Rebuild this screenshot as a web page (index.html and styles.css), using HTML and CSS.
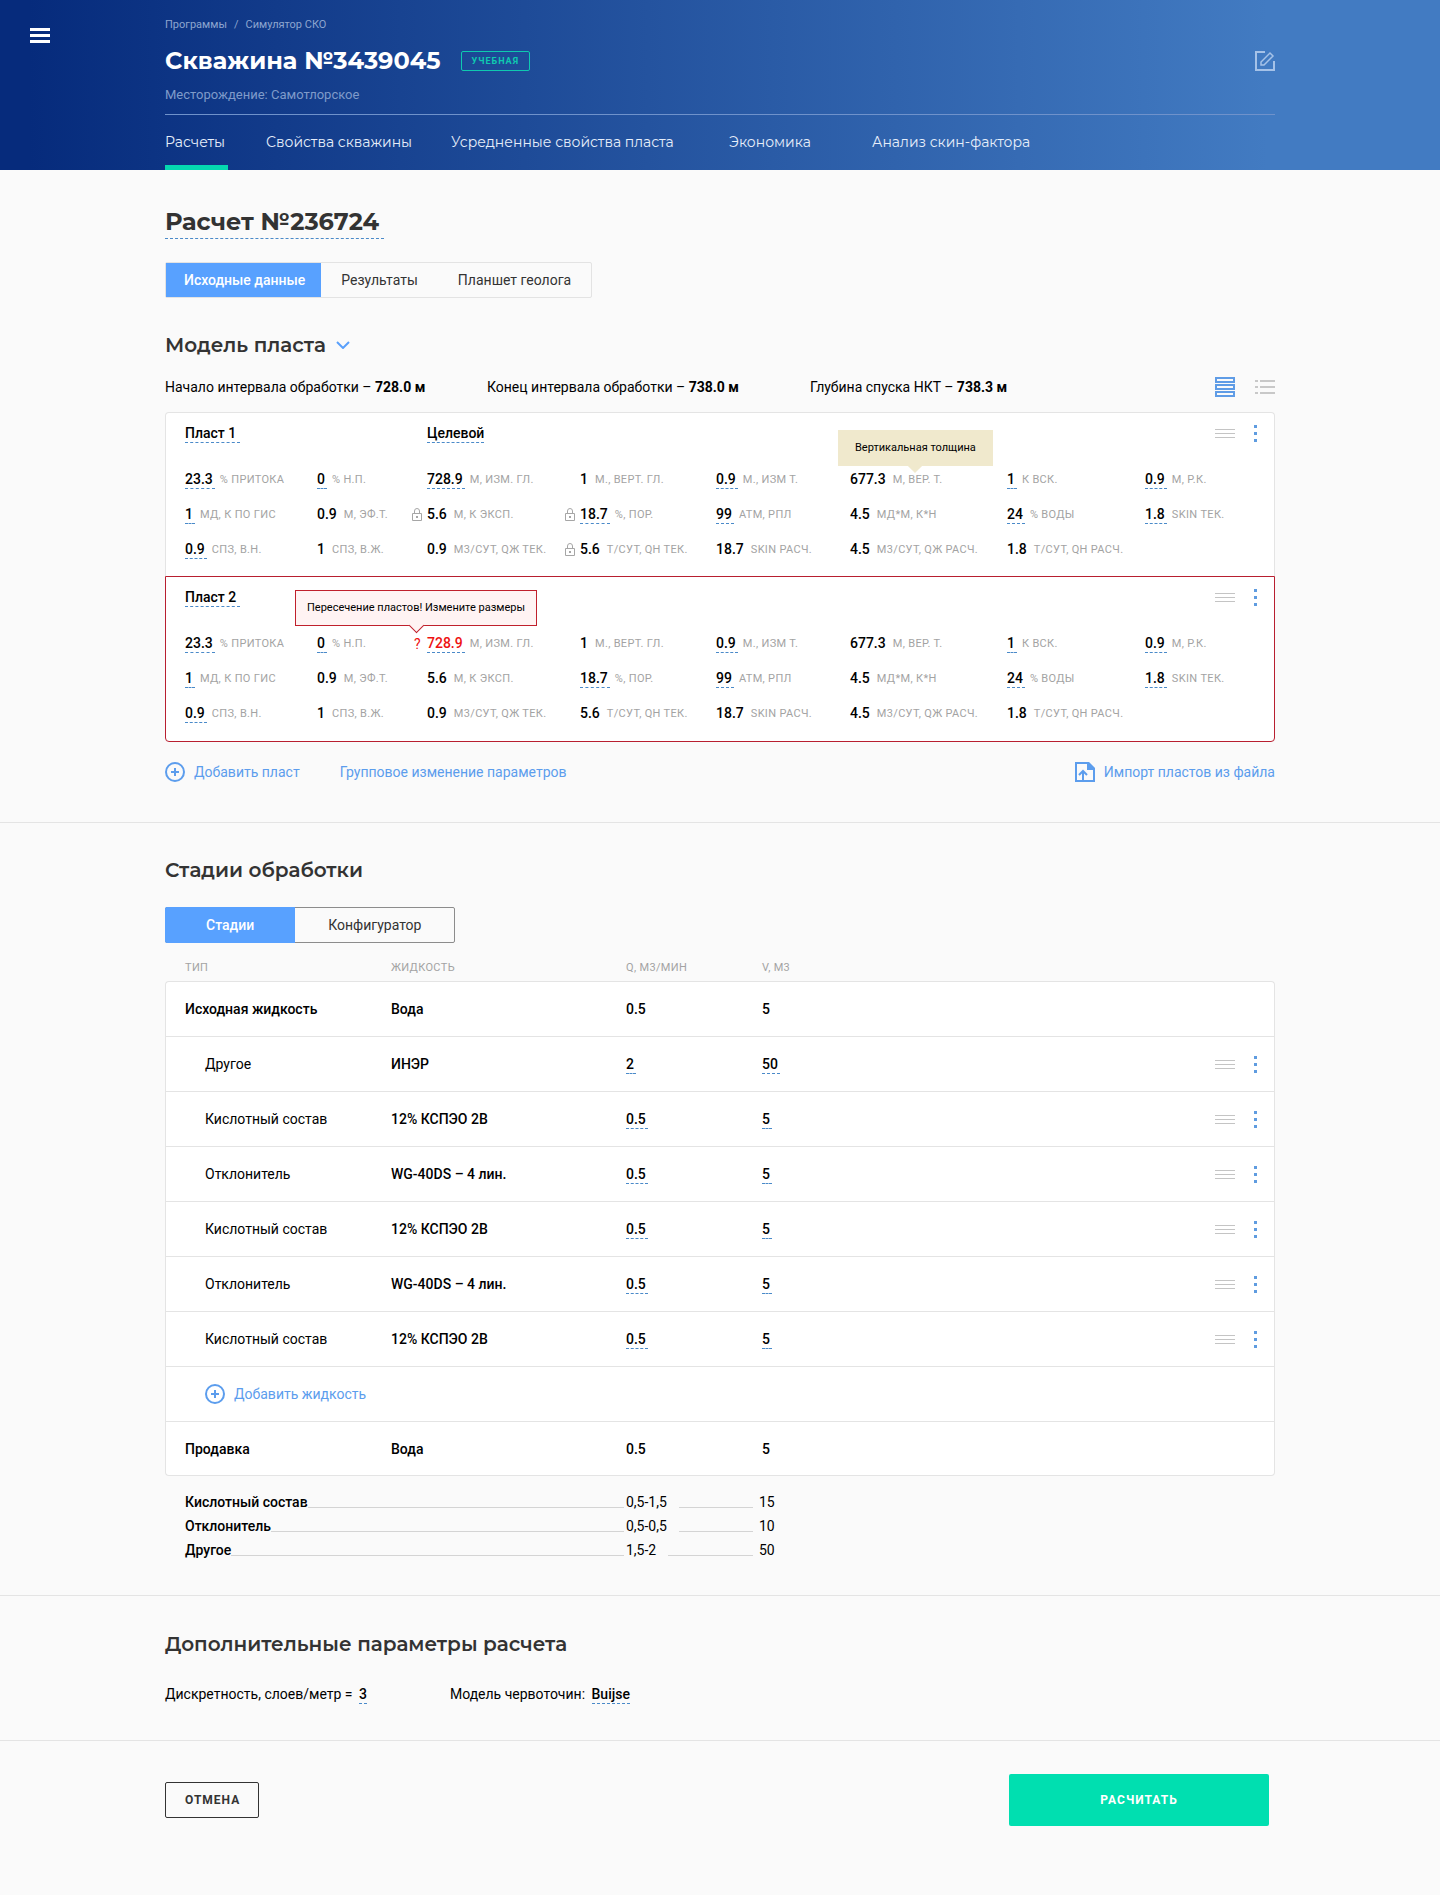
FILE: index.html
```html
<!DOCTYPE html>
<html lang="ru">
<head>
  <meta charset="UTF-8" />
  <meta name="viewport" content="width=device-width, initial-scale=1.0"/>
  <title>Скважина №3439045 | Симулятор СКО</title>
  <link rel="stylesheet" href="styles.css">
</head>
<body>

  <!-- icons -->
  <svg class="sprite" width="0" height="0" aria-hidden="true">
    <symbol id="i-lock" viewBox="0 0 10 13">
      <path d="M.5 5.500h9v7h-9zM2.500 5.500V3a2.500 2.500 0 0 1 5 0v2.500" fill="none" stroke="#a6a6a6"/>
      <path d="M4 8h2v2H4z" fill="#a6a6a6"/>
    </symbol>
    <symbol id="i-drag" viewBox="0 0 20 9">
      <path d="M0 .5h20M0 4.500h20M0 8.500h20" stroke="#c4c4c4"/>
    </symbol>
    <symbol id="i-dots" viewBox="0 0 3 17">
      <path d="M0 0h3v3H0zM0 7h3v3H0zM0 14h3v3H0z" fill="#5f9ce0"/>
    </symbol>
    <symbol id="i-plus" viewBox="0 0 20 20">
      <circle cx="10" cy="10" r="9" fill="none" stroke="#5c9ded" stroke-width="2"/>
      <path d="M10 6v8M6 10h8" stroke="#5c9ded" stroke-width="2"/>
    </symbol>
    <symbol id="i-import" viewBox="0 0 20 20">
      <path d="M1 1h12l6 6v12H1z" fill="none" stroke="#5c9ded" stroke-width="2"/>
      <path d="M12 0h2l6 6v2h-8z" fill="#5c9ded"/>
      <path d="M8 18V9M4 13l4-4 4 4" fill="none" stroke="#5c9ded" stroke-width="2"/>
    </symbol>
  </svg>

  <header class="header">
    <button class="menu-btn" type="button" aria-label="Меню">
      <svg width="20" height="15" viewBox="0 0 20 15"><path d="M0 0h20v3H0zM0 6h20v3H0zM0 12h20v3H0z" fill="#fff"/></svg>
    </button>
    <div class="container">
      <div class="breadcrumbs"><a href="#">Программы</a><span>/</span><a href="#">Симулятор СКО</a></div>
      <div class="well">
        <h1>Скважина №3439045</h1>
        <span class="badge">Учебная</span>
        <button class="edit-btn" type="button" aria-label="Редактировать">
          <svg width="20" height="20" viewBox="0 0 20 20" fill="none" stroke="#a5c2e8" stroke-width="2">
            <path d="M10 1H1v18h18v-9"/>
            <path d="M6 14v-3L15 2l3 3-9 9z" stroke-width="1.500"/>
          </svg>
        </button>
      </div>
      <p class="field">Месторождение: Самотлорское</p>
      <nav class="nav">
        <a href="#" class="active">Расчеты</a>
        <a href="#">Свойства скважины</a>
        <a href="#">Усредненные свойства пласта</a>
        <a href="#">Экономика</a>
        <a href="#">Анализ скин-фактора</a>
      </nav>
    </div>
  </header>

  <main>
    <section class="section model">
      <div class="container">
        <h2 class="calc-title">Расчет №236724</h2>
        <div class="tabs">
          <button type="button" class="active">Исходные данные</button>
          <button type="button">Результаты</button>
          <button type="button">Планшет геолога</button>
        </div>

        <h3>Модель пласта
          <svg width="14" height="8" viewBox="0 0 14 8"><path d="M1 1l6 6 6-6" fill="none" stroke="#5aa0fb" stroke-width="2"/></svg>
        </h3>
        <div class="info">
          <p>Начало интервала обработки – <b>728.0 м</b></p>
          <p>Конец интервала обработки – <b>738.0 м</b></p>
          <p>Глубина спуска НКТ – <b>738.3 м</b></p>
          <div class="views">
            <button type="button" aria-label="Карточки">
              <svg width="20" height="20" viewBox="0 0 20 20"><path d="M1 1h18v4H1zM1 8h18v4H1zM1 15h18v4H1z" fill="#fafafa" stroke="#5f9ce6" stroke-width="2"/></svg>
            </button>
            <button type="button" aria-label="Список">
              <svg width="20" height="16" viewBox="0 0 20 16"><path d="M0 2h3M5 2h15M0 8h3M5 8h15M0 14h3M5 14h15" stroke="#c8c8c8" stroke-width="2"/></svg>
            </button>
          </div>
        </div>

        <div class="layer">
          <div class="layer-head">
            <div class="layer-name"><button type="button" class="edit">Пласт 1</button></div>
            <button type="button" class="edit target">Целевой</button>
            <div class="tools">
              <button type="button" aria-label="Переместить"><svg width="20" height="9"><use href="#i-drag"/></svg></button>
              <button type="button" aria-label="Действия"><svg width="3" height="17"><use href="#i-dots"/></svg></button>
            </div>
          </div>
          <div class="params">
            <div class="param"><button type="button" class="edit">23.3</button><span>% притока</span></div>
            <div class="param"><button type="button" class="edit">0</button><span>% н.п.</span></div>
            <div class="param"><button type="button" class="edit">728.9</button><span>м, изм. гл.</span></div>
            <div class="param"><b>1</b><span>м., верт. гл.</span></div>
            <div class="param"><button type="button" class="edit">0.9</button><span>м., изм т.</span></div>
            <div class="param"><b>677.3</b><span>м, вер. т.</span><div class="tooltip" role="tooltip">Вертикальная толщина</div></div>
            <div class="param"><button type="button" class="edit">1</button><span>к вск.</span></div>
            <div class="param"><button type="button" class="edit">0.9</button><span>м, р.к.</span></div>

            <div class="param"><button type="button" class="edit">1</button><span>мд, к по гис</span></div>
            <div class="param"><b>0.9</b><span>м, эф.т.</span></div>
            <div class="param"><svg class="mark" width="10" height="13"><use href="#i-lock"/></svg><b>5.6</b><span>м, к эксп.</span></div>
            <div class="param"><svg class="mark" width="10" height="13"><use href="#i-lock"/></svg><button type="button" class="edit">18.7</button><span>%, пор.</span></div>
            <div class="param"><button type="button" class="edit">99</button><span>атм, рпл</span></div>
            <div class="param"><b>4.5</b><span>мд*м, к*h</span></div>
            <div class="param"><button type="button" class="edit">24</button><span>% воды</span></div>
            <div class="param"><button type="button" class="edit">1.8</button><span>skin тек.</span></div>

            <div class="param"><button type="button" class="edit">0.9</button><span>спз, в.н.</span></div>
            <div class="param"><b>1</b><span>спз, в.ж.</span></div>
            <div class="param"><b>0.9</b><span>м3/сут, qж тек.</span></div>
            <div class="param"><svg class="mark" width="10" height="13"><use href="#i-lock"/></svg><b>5.6</b><span>т/сут, qн тек.</span></div>
            <div class="param"><b>18.7</b><span>skin расч.</span></div>
            <div class="param"><b>4.5</b><span>м3/сут, qж расч.</span></div>
            <div class="param"><b>1.8</b><span>т/сут, qн расч.</span></div>
          </div>
        </div>

        <div class="layer layer-error">
          <div class="layer-head">
            <div class="layer-name"><button type="button" class="edit">Пласт 2</button></div>
            <div class="tools">
              <button type="button" aria-label="Переместить"><svg width="20" height="9"><use href="#i-drag"/></svg></button>
              <button type="button" aria-label="Действия"><svg width="3" height="17"><use href="#i-dots"/></svg></button>
            </div>
          </div>
          <div class="params">
            <div class="param"><button type="button" class="edit">23.3</button><span>% притока</span></div>
            <div class="param"><button type="button" class="edit">0</button><span>% н.п.</span></div>
            <div class="param invalid"><i class="mark">?</i><button type="button" class="edit">728.9</button><span>м, изм. гл.</span><div class="tooltip tooltip-error" role="tooltip">Пересечение пластов! Измените размеры</div></div>
            <div class="param"><b>1</b><span>м., верт. гл.</span></div>
            <div class="param"><button type="button" class="edit">0.9</button><span>м., изм т.</span></div>
            <div class="param"><b>677.3</b><span>м, вер. т.</span></div>
            <div class="param"><button type="button" class="edit">1</button><span>к вск.</span></div>
            <div class="param"><button type="button" class="edit">0.9</button><span>м, р.к.</span></div>

            <div class="param"><button type="button" class="edit">1</button><span>мд, к по гис</span></div>
            <div class="param"><b>0.9</b><span>м, эф.т.</span></div>
            <div class="param"><b>5.6</b><span>м, к эксп.</span></div>
            <div class="param"><button type="button" class="edit">18.7</button><span>%, пор.</span></div>
            <div class="param"><button type="button" class="edit">99</button><span>атм, рпл</span></div>
            <div class="param"><b>4.5</b><span>мд*м, к*h</span></div>
            <div class="param"><button type="button" class="edit">24</button><span>% воды</span></div>
            <div class="param"><button type="button" class="edit">1.8</button><span>skin тек.</span></div>

            <div class="param"><button type="button" class="edit">0.9</button><span>спз, в.н.</span></div>
            <div class="param"><b>1</b><span>спз, в.ж.</span></div>
            <div class="param"><b>0.9</b><span>м3/сут, qж тек.</span></div>
            <div class="param"><b>5.6</b><span>т/сут, qн тек.</span></div>
            <div class="param"><b>18.7</b><span>skin расч.</span></div>
            <div class="param"><b>4.5</b><span>м3/сут, qж расч.</span></div>
            <div class="param"><b>1.8</b><span>т/сут, qн расч.</span></div>
          </div>
        </div>

        <div class="actions">
          <button type="button" class="link-btn"><svg width="20" height="20"><use href="#i-plus"/></svg>Добавить пласт</button>
          <button type="button" class="link-btn">Групповое изменение параметров</button>
          <button type="button" class="link-btn import"><svg width="20" height="20"><use href="#i-import"/></svg>Импорт пластов из файла</button>
        </div>
      </div>
    </section>

    <section class="section stages">
      <div class="container">
        <h3>Стадии обработки</h3>
        <div class="tabs tabs-dark">
          <button type="button" class="active">Стадии</button>
          <button type="button">Конфигуратор</button>
        </div>

        <table class="stage-table">
          <colgroup><col class="c-type"><col class="c-fluid"><col class="c-q"><col></colgroup>
          <thead>
            <tr><th>Тип</th><th>Жидкость</th><th>Q, м3/мин</th><th>V, м3</th></tr>
          </thead>
          <tbody>
            <tr><td><b>Исходная жидкость</b></td><td><b>Вода</b></td><td><b>0.5</b></td><td><b>5</b></td></tr>
            <tr class="sub">
              <td>Другое</td><td><b>ИНЭР</b></td>
              <td><button type="button" class="edit">2</button></td>
              <td><div class="last"><button type="button" class="edit">50</button><div class="tools"><button type="button" aria-label="Переместить"><svg width="20" height="9"><use href="#i-drag"/></svg></button><button type="button" aria-label="Действия"><svg width="3" height="17"><use href="#i-dots"/></svg></button></div></div></td>
            </tr>
            <tr class="sub">
              <td>Кислотный состав</td><td><b>12% КСПЭО 2В</b></td>
              <td><button type="button" class="edit">0.5</button></td>
              <td><div class="last"><button type="button" class="edit">5</button><div class="tools"><button type="button" aria-label="Переместить"><svg width="20" height="9"><use href="#i-drag"/></svg></button><button type="button" aria-label="Действия"><svg width="3" height="17"><use href="#i-dots"/></svg></button></div></div></td>
            </tr>
            <tr class="sub">
              <td>Отклонитель</td><td><b>WG-40DS – 4 лин.</b></td>
              <td><button type="button" class="edit">0.5</button></td>
              <td><div class="last"><button type="button" class="edit">5</button><div class="tools"><button type="button" aria-label="Переместить"><svg width="20" height="9"><use href="#i-drag"/></svg></button><button type="button" aria-label="Действия"><svg width="3" height="17"><use href="#i-dots"/></svg></button></div></div></td>
            </tr>
            <tr class="sub">
              <td>Кислотный состав</td><td><b>12% КСПЭО 2В</b></td>
              <td><button type="button" class="edit">0.5</button></td>
              <td><div class="last"><button type="button" class="edit">5</button><div class="tools"><button type="button" aria-label="Переместить"><svg width="20" height="9"><use href="#i-drag"/></svg></button><button type="button" aria-label="Действия"><svg width="3" height="17"><use href="#i-dots"/></svg></button></div></div></td>
            </tr>
            <tr class="sub">
              <td>Отклонитель</td><td><b>WG-40DS – 4 лин.</b></td>
              <td><button type="button" class="edit">0.5</button></td>
              <td><div class="last"><button type="button" class="edit">5</button><div class="tools"><button type="button" aria-label="Переместить"><svg width="20" height="9"><use href="#i-drag"/></svg></button><button type="button" aria-label="Действия"><svg width="3" height="17"><use href="#i-dots"/></svg></button></div></div></td>
            </tr>
            <tr class="sub">
              <td>Кислотный состав</td><td><b>12% КСПЭО 2В</b></td>
              <td><button type="button" class="edit">0.5</button></td>
              <td><div class="last"><button type="button" class="edit">5</button><div class="tools"><button type="button" aria-label="Переместить"><svg width="20" height="9"><use href="#i-drag"/></svg></button><button type="button" aria-label="Действия"><svg width="3" height="17"><use href="#i-dots"/></svg></button></div></div></td>
            </tr>
            <tr class="sub"><td colspan="4"><button type="button" class="link-btn"><svg width="20" height="20"><use href="#i-plus"/></svg>Добавить жидкость</button></td></tr>
            <tr><td><b>Продавка</b></td><td><b>Вода</b></td><td><b>0.5</b></td><td><b>5</b></td></tr>
          </tbody>
        </table>

        <div class="totals">
          <div class="total"><b>Кислотный состав</b><span>0,5-1,5</span><span>15</span></div>
          <div class="total"><b>Отклонитель</b><span>0,5-0,5</span><span>10</span></div>
          <div class="total"><b>Другое</b><span>1,5-2</span><span>50</span></div>
        </div>
      </div>
    </section>

    <section class="section extra">
      <div class="container">
        <h3>Дополнительные параметры расчета</h3>
        <div class="extra-params">
          <p>Дискретность, слоев/метр = <button type="button" class="edit">3</button></p>
          <p>Модель червоточин: <button type="button" class="edit">Buijse</button></p>
        </div>
      </div>
    </section>

    <div class="container footer">
      <button type="button" class="btn-cancel">Отмена</button>
      <button type="submit" class="btn-submit">Расчитать</button>
    </div>
  </main>

</body>
</html>
```
FILE: styles.css
```css
* {
  box-sizing: border-box;
}

body {
  margin: 0;
  font-family: Roboto, sans-serif;
  font-size: 14px;
  line-height: 20px;
  background-color: #fafafa;
  color: #000;
}

h1, h2, h3, p {
  margin: 0;
}

b {
  font-weight: 500;
}

button {
  margin: 0;
  padding: 0;
  border: none;
  background: none;
  font: inherit;
  color: inherit;
  cursor: pointer;
}

svg {
  display: block;
  flex: none;
}

.sprite {
  position: absolute;
}

.container {
  max-width: 1110px;
  margin: 0 auto;
}

/* header */
.header {
  position: relative;
  background: linear-gradient(90deg, #062b7c 2%, #427bc2 88%);
  color: #fff;
}

.menu-btn {
  position: absolute;
  left: 30px;
  top: 28px;
}

.breadcrumbs {
  display: flex;
  gap: 7px;
  padding-top: 15px;
  font-size: 11px;
  color: #8da6d0;
}

.breadcrumbs a {
  color: inherit;
  text-decoration: none;
}

.well {
  display: flex;
  align-items: center;
  height: 30px;
  margin-top: 11px;
}

.well h1 {
  font-family: Montserrat, Inter, sans-serif;
  font-size: 24px;
  font-weight: 700;
}

.badge {
  height: 20px;
  margin-left: 20px;
  padding: 0 10px;
  border: 1px solid #0fc9b0;
  border-radius: 2px;
  font-size: 9px;
  font-weight: 700;
  line-height: 19px;
  letter-spacing: 1px;
  text-transform: uppercase;
  color: #0fc9b0;
}

.edit-btn {
  margin-left: auto;
}

.field {
  padding: 9px 0;
  border-bottom: 1px solid #6f92cb;
  font-size: 13px;
  color: #7f9bca;
}

.nav {
  display: grid;
  grid-template-columns: 101fr 185fr 278fr 143fr 403fr;
  font-family: Montserrat, Inter, sans-serif;
}

.nav a {
  justify-self: start;
  padding: 17px 3px 13px 0;
  border-bottom: 5px solid transparent;
  color: #e6eefa;
  text-decoration: none;
}

.nav .active {
  border-color: #05d8b0;
}

/* tabs */
.tabs {
  display: flex;
  width: fit-content;
  height: 36px;
  border: 1px solid #e3e3e3;
  border-radius: 2px;
  color: #333;
}

.tabs button {
  padding: 0 20px;
}

.tabs .active {
  padding: 0 16px 0 18px;
  background-color: #58a1ff;
  color: #fff;
  font-weight: 500;
}

.tabs-dark {
  border-color: #8c8c8c;
}

.tabs-dark button {
  padding: 0 33px;
}

.tabs-dark .active {
  margin: -1px 0 -1px -1px;
  padding: 0 41px;
  border-radius: 2px 0 0 2px;
}

/* sections */
.section {
  border-bottom: 1px solid #e4e4e4;
}

h3 {
  display: flex;
  align-items: center;
  gap: 10px;
  font-family: Montserrat, Inter, sans-serif;
  font-size: 20px;
  line-height: 24px;
  font-weight: 600;
  color: #333;
}

.model {
  padding: 37px 0 40px;
}

.calc-title {
  width: fit-content;
  margin-bottom: 23px;
  padding: 0 5px 1px 0;
  border-bottom: 1px dashed #4a8ac9;
  font-family: Montserrat, Inter, sans-serif;
  font-size: 24px;
  line-height: 30px;
  font-weight: 700;
  color: #333;
}

.model h3 {
  margin-top: 35px;
}

.info {
  display: grid;
  grid-template-columns: 322fr 323fr 405fr 60px;
  align-items: center;
  margin: 20px 0 15px;
}

.info b {
  font-weight: 700;
}

.views {
  display: flex;
  align-items: center;
  justify-content: space-between;
}

.edit {
  padding: 0 2px 0 0;
  border-bottom: 1px dashed #4a8ac9;
  font-weight: 500;
  line-height: 18px;
  text-align: left;
}

.tools {
  display: flex;
  align-items: center;
  gap: 19px;
  margin-left: auto;
  padding-right: 17px;
}

/* layer cards */
.layer {
  padding: 10px 0 9px 19px;
  border: 1px solid #e4e4e4;
  border-bottom: none;
  border-radius: 4px 4px 0 0;
  background-color: #fff;
}

.layer-error {
  padding-bottom: 10px;
  border: 1px solid #b81f30;
  border-radius: 0 0 4px 4px;
}

.layer-head {
  display: flex;
  align-items: center;
  height: 21px;
}

.layer-name {
  display: flex;
  width: 242px;
}

.layer-name .edit {
  padding-right: 4px;
}

.target {
  padding-right: 0;
}

.params {
  display: grid;
  grid-template-columns: 132fr 110fr 153fr 136fr 134fr 157fr 138fr 129fr;
  grid-auto-rows: 35px;
  margin-top: 18px;
}

.param {
  position: relative;
  display: flex;
  align-items: center;
  gap: 5px;
  white-space: nowrap;
}

.param b {
  padding-right: 2px;
  line-height: 18px;
  border-bottom: 1px solid transparent;
}

.param span {
  font-size: 11px;
  letter-spacing: 0.03em;
  text-transform: uppercase;
  color: #a3a3a3;
}

.mark {
  position: absolute;
  left: -15px;
  font-style: normal;
}

.invalid .mark {
  left: -13px;
}

.invalid .mark,
.invalid .edit {
  color: #ee1111;
}

.tooltip {
  position: absolute;
  left: -12px;
  bottom: 31px;
  height: 36px;
  padding: 0 17px;
  background-color: #f0e9cd;
  font-size: 11px;
  line-height: 36px;
}

.tooltip::after {
  content: "";
  position: absolute;
  left: 50%;
  bottom: -5px;
  width: 10px;
  height: 10px;
  margin-left: -5px;
  background-color: inherit;
  transform: rotate(45deg);
}

.tooltip-error {
  left: -132px;
  bottom: 35px;
  padding: 0 11px;
  border: 1px solid #c0202c;
  background-color: #fff3f3;
  line-height: 34px;
}

.tooltip-error::after {
  bottom: -6px;
  border: solid #c0202c;
  border-width: 0 1px 1px 0;
}

.actions {
  display: flex;
  align-items: center;
  gap: 40px;
  margin-top: 20px;
}

.link-btn {
  display: flex;
  align-items: center;
  gap: 9px;
  color: #5c9ded;
}

.import {
  margin-left: auto;
}

/* stages */
.stages {
  padding: 35px 0 33px;
}

.stages .tabs {
  margin-top: 25px;
}

.stage-table {
  width: 100%;
  margin-top: 11px;
  border-collapse: separate;
  border-spacing: 0;
  table-layout: fixed;
}

.c-type {
  width: 226px;
}

.c-fluid {
  width: 235px;
}

.c-q {
  width: 136px;
}

.stage-table th {
  height: 27px;
  padding: 0;
  font-size: 11px;
  font-weight: 400;
  text-align: left;
  letter-spacing: 0.03em;
  text-transform: uppercase;
  color: #a3a3a3;
}

.stage-table td {
  height: 55px;
  padding: 0;
  border-top: 1px solid #e4e4e4;
  background-color: #fff;
}

.stage-table th:first-child {
  padding-left: 20px;
}

.stage-table td:first-child {
  padding-left: 19px;
  border-left: 1px solid #e4e4e4;
}

.stage-table .sub td:first-child {
  padding-left: 39px;
}

.stage-table td:last-child {
  border-right: 1px solid #e4e4e4;
}

.stage-table tr:last-child td {
  border-bottom: 1px solid #e4e4e4;
}

.stage-table tbody tr:first-child td:first-child {
  border-top-left-radius: 4px;
}

.stage-table tbody tr:first-child td:last-child {
  border-top-right-radius: 4px;
}

.stage-table tr:last-child td:first-child {
  border-bottom-left-radius: 4px;
}

.stage-table tr:last-child td:last-child {
  border-bottom-right-radius: 4px;
}

.last {
  display: flex;
  align-items: center;
}

.totals {
  margin-top: 14px;
  padding-left: 20px;
}

.total {
  display: grid;
  grid-template-columns: 441px 133px auto;
  line-height: 24px;
}

.total b,
.total span:nth-child(2) {
  display: flex;
}

.total b::after,
.total span:nth-child(2)::after {
  content: "";
  flex: 1;
  height: 17px;
  margin-right: 2px;
  border-bottom: 1px solid #d4d4d4;
}

.total span:nth-child(2)::after {
  margin: 0 6px 0 12px;
}

/* extra */
.extra {
  padding: 36px 0;
}

.extra-params {
  display: flex;
  gap: 83px;
  margin-top: 28px;
}

.extra-params .edit {
  margin-left: 3px;
  padding: 0;
}

.footer {
  display: flex;
  align-items: center;
  justify-content: space-between;
  padding: 33px 6px 69px 0;
}

.btn-cancel {
  height: 36px;
  padding: 0 18px 0 19px;
  border: 1px solid #333;
  border-radius: 2px;
  font-size: 12px;
  font-weight: 700;
  letter-spacing: 1px;
  text-transform: uppercase;
  color: #333;
}

.btn-submit {
  width: 260px;
  height: 52px;
  border-radius: 2px;
  background-color: #00dfb0;
  font-size: 12px;
  font-weight: 700;
  letter-spacing: 1px;
  text-transform: uppercase;
  color: #fff;
}
```
